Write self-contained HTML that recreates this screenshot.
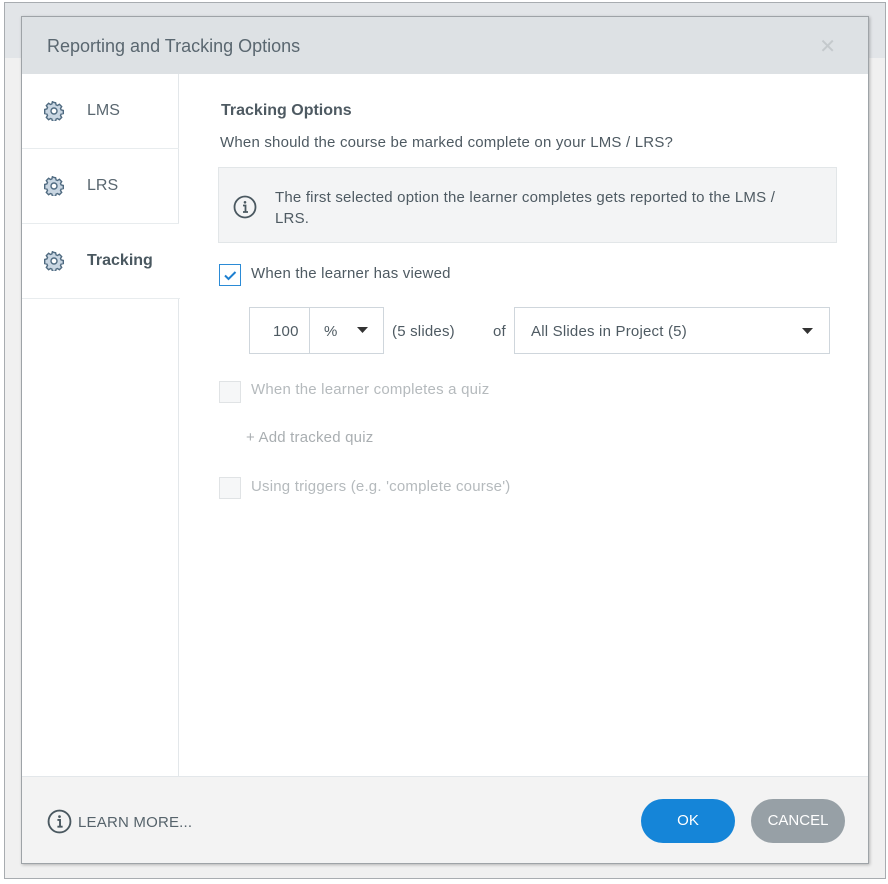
<!DOCTYPE html>
<html><head><style>
*{box-sizing:border-box;margin:0;padding:0}
body{width:888px;height:884px;background:#fff;font-family:"Liberation Sans",sans-serif;position:relative;overflow:hidden;color:#3c4a52}
.frame{position:absolute;left:4px;top:2px;width:882px;height:877px;background:#f0f0f0;border:1px solid #a8acb0}
.topbar{position:absolute;left:5px;top:3px;width:880px;height:55px;background:#e2e5e8}
.dlg{position:absolute;left:21px;top:16px;width:848px;height:848px;background:#fff;border:1px solid #9ea3a7;box-shadow:1px 1px 3px rgba(0,0,0,.25)}
.hdr{position:absolute;left:0;top:0;width:846px;height:57px;background:#dde1e4;font-size:18px;color:#5a6770;padding:19px 0 0 25px}
.x{position:absolute;right:32px;top:17px;font-size:20px;color:#c4c9cc}
.side{position:absolute;left:0;top:57px;width:157px;height:702px;border-right:1px solid #e3e7ea}
.item{position:absolute;left:0;width:157px;height:75px;border-bottom:1px solid #e8ecee;font-size:16px;color:#5a6770;padding:28px 0 0 65px}
.item svg{position:absolute;left:22px;top:27px}
.item.sel{background:#fff;width:158px;font-weight:bold;color:#4a5860}
.foot{position:absolute;left:0;top:759px;width:846px;height:87px;background:#f3f3f3;border-top:1px solid #e3e7ea}
.t{position:absolute;font-size:15px;color:#4e5a62;letter-spacing:0.2px}
.cb{position:absolute;width:22px;height:22px;border:1px solid #e0e3e5;background:#f6f7f8}
.box{position:absolute;border:1px solid #cfd6dc;background:#fff}
.btn{position:absolute;height:44px;border-radius:22px;color:#fff;font-size:15px;text-align:center;line-height:44px}
</style></head><body>
<div class="frame"></div><div class="topbar"></div>
<div class="dlg">
<div class="hdr">Reporting and Tracking Options</div>
<div class="x">✕</div>
<div class="side">
 <div class="item" style="top:0">
  <svg width="20" height="20" viewBox="0 0 20 20"><path d="M10 1.5l1.6.2.5 2.2 1.4.6 1.9-1.2 2.3 2.3-1.2 1.9.6 1.4 2.2.5v3.2l-2.2.5-.6 1.4 1.2 1.9-2.3 2.3-1.9-1.2-1.4.6-.5 2.2H8.4l-.5-2.2-1.4-.6-1.9 1.2-2.3-2.3 1.2-1.9-.6-1.4-2.2-.5V8.4l2.2-.5.6-1.4-1.2-1.9 2.3-2.3 1.9 1.2 1.4-.6.5-2.2z" fill="#c9d6e2" stroke="#4f6a80" stroke-width="1.4"/><circle cx="10" cy="10" r="3" fill="#fff" stroke="#4f6a80" stroke-width="1.4"/></svg>LMS</div>
 <div class="item" style="top:75px">
  <svg width="20" height="20" viewBox="0 0 20 20"><path d="M10 1.5l1.6.2.5 2.2 1.4.6 1.9-1.2 2.3 2.3-1.2 1.9.6 1.4 2.2.5v3.2l-2.2.5-.6 1.4 1.2 1.9-2.3 2.3-1.9-1.2-1.4.6-.5 2.2H8.4l-.5-2.2-1.4-.6-1.9 1.2-2.3-2.3 1.2-1.9-.6-1.4-2.2-.5V8.4l2.2-.5.6-1.4-1.2-1.9 2.3-2.3 1.9 1.2 1.4-.6.5-2.2z" fill="#c9d6e2" stroke="#4f6a80" stroke-width="1.4"/><circle cx="10" cy="10" r="3" fill="#fff" stroke="#4f6a80" stroke-width="1.4"/></svg>LRS</div>
 <div class="item sel" style="top:150px">
  <svg width="20" height="20" viewBox="0 0 20 20"><path d="M10 1.5l1.6.2.5 2.2 1.4.6 1.9-1.2 2.3 2.3-1.2 1.9.6 1.4 2.2.5v3.2l-2.2.5-.6 1.4 1.2 1.9-2.3 2.3-1.9-1.2-1.4.6-.5 2.2H8.4l-.5-2.2-1.4-.6-1.9 1.2-2.3-2.3 1.2-1.9-.6-1.4-2.2-.5V8.4l2.2-.5.6-1.4-1.2-1.9 2.3-2.3 1.9 1.2 1.4-.6.5-2.2z" fill="#c9d6e2" stroke="#4f6a80" stroke-width="1.4"/><circle cx="10" cy="10" r="3" fill="#fff" stroke="#4f6a80" stroke-width="1.4"/></svg>Tracking</div>
</div>
<div class="t" style="left:199px;top:85px;font-weight:bold;font-size:16px;letter-spacing:0">Tracking Options</div>
<div class="t" style="left:198px;top:117px">When should the course be marked complete on your LMS / LRS?</div>
<div style="position:absolute;left:196px;top:150px;width:619px;height:76px;background:#f3f4f5;border:1px solid #e2e6e8"></div>
<svg style="position:absolute;left:211px;top:178px" width="24" height="24" viewBox="0 0 24 24"><circle cx="12" cy="12" r="10.5" fill="none" stroke="#4a5860" stroke-width="1.8"/><circle cx="12" cy="7.3" r="1.3" fill="#4a5860"/><path d="M10 10.5h2.5v6.5M10 17h5" stroke="#4a5860" stroke-width="1.8" fill="none"/></svg>
<div class="t" style="left:253px;top:170px;line-height:21px;width:560px">The first selected option the learner completes gets reported to the LMS /<br>LRS.</div>
<div class="cb" style="left:197px;top:247px;border-color:#2b8bd6;background:#fff"><svg width="20" height="20" viewBox="0 0 20 20"><path d="M5 10.5l3.5 3.5 7-7" fill="none" stroke="#1d7fd0" stroke-width="2"/></svg></div>
<div class="t" style="left:229px;top:248px">When the learner has viewed</div>
<div class="box" style="left:227px;top:290px;width:135px;height:47px"></div>
<div style="position:absolute;left:287px;top:291px;width:1px;height:45px;background:#cfd6dc"></div>
<div class="t" style="left:251px;top:306px">100</div>
<div class="t" style="left:302px;top:306px">%</div>
<svg style="position:absolute;left:335px;top:310px" width="11" height="6"><path d="M0 0h11L5.5 6z" fill="#333"/></svg>
<div class="t" style="left:370px;top:306px">(5 slides)</div>
<div class="t" style="left:471px;top:306px">of</div>
<div class="box" style="left:492px;top:290px;width:316px;height:47px"></div>
<div class="t" style="left:509px;top:306px">All Slides in Project (5)</div>
<svg style="position:absolute;left:780px;top:311px" width="11" height="6"><path d="M0 0h11L5.5 6z" fill="#333"/></svg>
<div class="cb" style="left:197px;top:364px"></div>
<div class="t" style="left:229px;top:364px;color:#b5babd">When the learner completes a quiz</div>
<div class="t" style="left:224px;top:412px;color:#a9aeb1">+ Add tracked quiz</div>
<div class="cb" style="left:197px;top:460px"></div>
<div class="t" style="left:229px;top:461px;color:#b5babd">Using triggers (e.g. 'complete course')</div>
<div class="foot"></div>
<svg style="position:absolute;left:25px;top:792px" width="25" height="25" viewBox="0 0 24 24"><circle cx="12" cy="12" r="10.5" fill="none" stroke="#4a5860" stroke-width="1.8"/><circle cx="12" cy="7.3" r="1.3" fill="#4a5860"/><path d="M10 10.5h2.5v6.5M10 17h5" stroke="#4a5860" stroke-width="1.8" fill="none"/></svg>
<div class="t" style="left:56px;top:797px;color:#56636b">LEARN MORE...</div>
<div class="btn" style="left:619px;top:782px;width:94px;background:#1585d8">OK</div>
<div class="btn" style="left:729px;top:782px;width:94px;background:#97a0a6">CANCEL</div>
</div>
</body></html>
